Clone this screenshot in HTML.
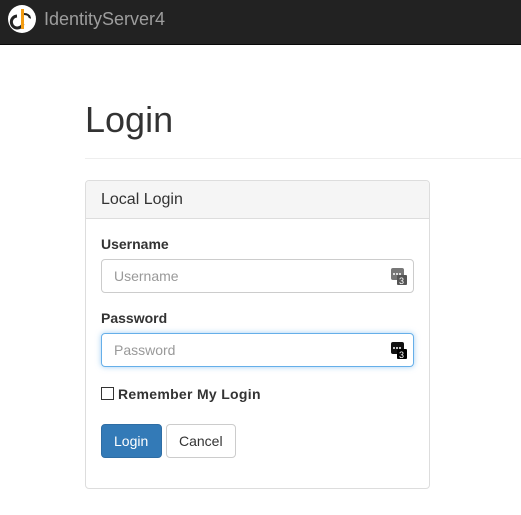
<!DOCTYPE html>
<html><head><meta charset="utf-8"><style>
*{box-sizing:border-box}
body{margin:0;width:521px;height:515px;overflow:hidden;background:#fff;font-family:"Liberation Sans",sans-serif;color:#333;font-size:14px}
.nav{height:45px;background:#222;border-bottom:1px solid #080808;position:relative}
.nav .brand{position:absolute;left:44px;top:9px;font-size:18px;color:#9d9d9d}
.logo{position:absolute;left:7px;top:4px}
h1{position:absolute;left:85px;top:100px;margin:0;font-size:36px;font-weight:500;line-height:40px}
.hr{position:absolute;left:85px;top:158px;width:436px;height:1px;background:#eee}
.panel{position:absolute;left:85px;top:180px;width:345px;height:309px;border:1px solid #ddd;border-radius:4px}
.ph{height:38px;background:#f5f5f5;border-bottom:1px solid #ddd;padding:10px 15px;font-size:16px;line-height:18px;border-radius:3px 3px 0 0}
.lbl{position:absolute;left:15px;font-weight:bold}
.inp{position:absolute;left:15px;width:313px;height:34px;border:1px solid #ccc;border-radius:4px;padding:7px 12px;color:#999;line-height:18px}
.inp.f{border-color:#66afe9;box-shadow:0 0 6px rgba(102,175,233,.6)}
.ic{position:absolute;right:6px;top:8px;width:16px;height:17px}
.cb{position:absolute;left:15px;top:206px;width:13px;height:13px;border:1px solid #333}
.btn{position:absolute;top:243px;height:34px;border-radius:4px;padding:8px 12px;line-height:16px;font-size:14px}
</style></head><body>
<div class="nav">
<svg class="logo" width="30" height="30" viewBox="0 0 30 30"><circle cx="15" cy="15" r="14" fill="#fff"/><path d="M10 12a6 6 0 1 0 6 8" stroke="#222" stroke-width="3" fill="none"/><rect x="14" y="5" width="3" height="20" fill="#f39c12"/><path d="M17 10q5 0 6 4" stroke="#222" stroke-width="2" fill="none"/><path d="M21 13l3 2 -1-4z" fill="#222"/></svg>
<div class="brand">IdentityServer4</div>
</div>
<h1>Login</h1>
<div class="hr"></div>
<div class="panel">
<div class="ph">Local Login</div>
<div class="lbl" style="top:55px">Username</div>
<div class="inp" style="top:78px">Username<svg class="ic" viewBox="0 0 16 17"><rect x="0" y="0" width="13" height="12" rx="2" fill="#777"/><rect x="6" y="7" width="10" height="10" rx="1" fill="#555"/><text x="8" y="16" font-size="9" fill="#fff" font-family="Liberation Sans">3</text><circle cx="3" cy="6" r="1" fill="#fff"/><circle cx="6" cy="6" r="1" fill="#fff"/><circle cx="9" cy="6" r="1" fill="#fff"/></svg></div>
<div class="lbl" style="top:129px">Password</div>
<div class="inp f" style="top:152px">Password<svg class="ic" viewBox="0 0 16 17"><rect x="0" y="0" width="13" height="12" rx="2" fill="#111"/><rect x="6" y="7" width="10" height="10" rx="1" fill="#000"/><text x="8" y="16" font-size="9" fill="#fff" font-family="Liberation Sans">3</text><circle cx="3" cy="6" r="1" fill="#fff"/><circle cx="6" cy="6" r="1" fill="#fff"/><circle cx="9" cy="6" r="1" fill="#fff"/></svg></div>
<div class="cb"></div>
<div class="lbl" style="top:205px;left:32px;letter-spacing:0.3px">Remember My Login</div>
<div class="btn" style="left:15px;width:61px;background:#337ab7;border:1px solid #2e6da4;color:#fff">Login</div>
<div class="btn" style="left:80px;width:70px;background:#fff;border:1px solid #ccc;color:#333">Cancel</div>
</div>
</body></html>
